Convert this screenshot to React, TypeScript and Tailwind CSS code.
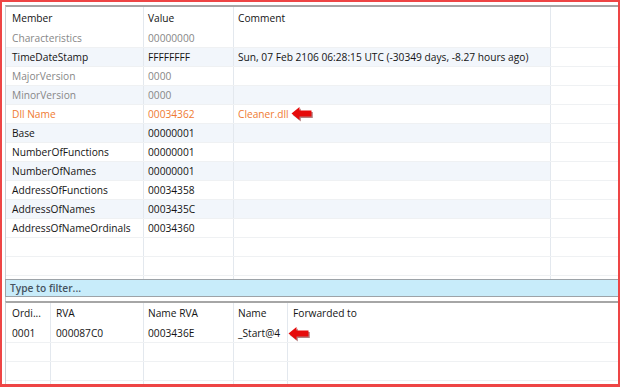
import React from "react";

type Row = { m: string; v: string; c?: string; kind?: "gray" | "orange" | "normal"; arrow?: boolean };

const rows: Row[] = [
  { m: "Characteristics", v: "00000000", kind: "gray" },
  { m: "TimeDateStamp", v: "FFFFFFFF", c: "Sun, 07 Feb 2106 06:28:15 UTC (-30349 days, -8.27 hours ago)" },
  { m: "MajorVersion", v: "0000", kind: "gray" },
  { m: "MinorVersion", v: "0000", kind: "gray" },
  { m: "Dll Name", v: "00034362", c: "Cleaner.dll", kind: "orange", arrow: true },
  { m: "Base", v: "00000001" },
  { m: "NumberOfFunctions", v: "00000001" },
  { m: "NumberOfNames", v: "00000001" },
  { m: "AddressOfFunctions", v: "00034358" },
  { m: "AddressOfNames", v: "0003435C" },
  { m: "AddressOfNameOrdinals", v: "00034360" },
];

function Arrow() {
  return (
    <svg width="24" height="17" viewBox="0 0 24 17" className="block">
      <path d="M0.5 7.5 L8.5 1 L8.5 4.5 L20.5 4.5 L20.5 10.5 L8.5 10.5 L8.5 14 Z" fill="#6a0000" opacity="0.5" transform="translate(1.3 1.6)" />
      <path d="M0.5 7.5 L8.5 1 L8.5 4.5 L20.5 4.5 L20.5 10.5 L8.5 10.5 L8.5 14 Z" fill="#e60b0b" />
    </svg>
  );
}

export default function App() {
  return (
    <div className="w-[620px] h-[387px] bg-white border-t-2 border-l-2 border-r-2 border-b-[3px] border-[#ee4545] flex flex-col overflow-hidden font-['Open_Sans','Noto_Sans',sans-serif] text-[10.2px] leading-none">
      <div className="flex-1 flex flex-col pt-[3px] pl-[3px] min-h-0">
        <div className="border-t-2 border-l border-t-[#a6a6a6] border-l-[#c9cdd2] flex flex-col h-[274px]">
          <div className="flex h-[22px] text-[#141414]">
            <div className="w-[138px] border-r border-[#e3e8ee] pl-[6px] flex items-center">Member</div>
            <div className="w-[90px] border-r border-[#e3e8ee] pl-[4px] flex items-center">Value</div>
            <div className="w-[317px] border-r border-[#e3e8ee] pl-[4px] flex items-center">Comment</div>
            <div className="flex-1" />
          </div>
          {rows.map((r, i) => {
            const color =
              r.kind === "gray" ? "text-[#878787]" : r.kind === "orange" ? "text-[#ef7a32]" : "text-[#141414]";
            const bg = i % 2 === 1 ? "bg-[#f2f6fb]" : "bg-white";
            return (
              <div key={r.m} className={`flex h-[19px] border-b border-[#eff1f3] ${color}`}>
                <div className={`w-[138px] border-r border-[#e3e8ee] pl-[6px] flex items-center ${bg}`}>{r.m}</div>
                <div className={`w-[90px] border-r border-[#e3e8ee] pl-[4px] flex items-center ${bg}`}>{r.v}</div>
                <div className={`w-[317px] border-r border-[#e3e8ee] pl-[4px] flex items-center whitespace-nowrap ${bg}`}>
                  {r.c}
                  {r.arrow && (
                    <span className="ml-[2px] mt-[1px]">
                      <Arrow />
                    </span>
                  )}
                </div>
                <div className="flex-1" />
              </div>
            );
          })}
          {[0, 1].map((k) => (
            <div key={k} className="flex h-[19px] border-b border-[#eff1f3]">
              <div className="w-[138px] border-r border-[#e3e8ee]" />
              <div className="w-[90px] border-r border-[#e3e8ee]" />
              <div className="w-[317px] border-r border-[#e3e8ee]" />
              <div className="flex-1" />
            </div>
          ))}
          <div className="flex flex-1">
            <div className="w-[138px] border-r border-[#e3e8ee]" />
            <div className="w-[90px] border-r border-[#e3e8ee]" />
            <div className="w-[317px] border-r border-[#e3e8ee]" />
            <div className="flex-1" />
          </div>
        </div>
        <div className="h-[18px] border-t border-b border-l border-[#9da3a8] bg-[#c8ecfa] flex items-center pl-[4px] font-semibold text-[#46535f]">
          Type to filter...
        </div>
        <div className="h-[4px] border-l border-[#c9cdd2]" />
        <div className="flex-1 border-t-2 border-l border-t-[#a6a6a6] border-l-[#c9cdd2] flex flex-col text-[#141414]">
          <div className="flex h-[21px]">
            <div className="w-[45px] border-r border-[#e3e8ee] pl-[6px] flex items-center">Ordi...</div>
            <div className="w-[93px] border-r border-[#e3e8ee] pl-[5px] flex items-center">RVA</div>
            <div className="w-[90px] border-r border-[#e3e8ee] pl-[4px] flex items-center">Name RVA</div>
            <div className="w-[54px] border-r border-[#e3e8ee] pl-[4px] flex items-center">Name</div>
            <div className="flex-1 pl-[5px] flex items-center">Forwarded to</div>
          </div>
          <div className="flex h-[19px] border-b border-[#eff1f3]">
            <div className="w-[45px] border-r border-[#e3e8ee] pl-[6px] flex items-center">0001</div>
            <div className="w-[93px] border-r border-[#e3e8ee] pl-[5px] flex items-center">000087C0</div>
            <div className="w-[90px] border-r border-[#e3e8ee] pl-[4px] flex items-center">0003436E</div>
            <div className="relative w-[54px] border-r border-[#e3e8ee] pl-[4px] flex items-center">
              _Start@4
              <span className="absolute left-[54px] top-[2px]">
                <Arrow />
              </span>
            </div>
            <div className="flex-1" />
          </div>
          {[0, 1].map((k) => (
            <div key={k} className="flex h-[19px] border-b border-[#eff1f3]">
              <div className="w-[45px] border-r border-[#e3e8ee]" />
              <div className="w-[93px] border-r border-[#e3e8ee]" />
              <div className="w-[90px] border-r border-[#e3e8ee]" />
              <div className="w-[54px] border-r border-[#e3e8ee]" />
              <div className="flex-1" />
            </div>
          ))}
          <div className="flex flex-1">
            <div className="w-[45px] border-r border-[#e3e8ee]" />
            <div className="w-[93px] border-r border-[#e3e8ee]" />
            <div className="w-[90px] border-r border-[#e3e8ee]" />
            <div className="w-[54px] border-r border-[#e3e8ee]" />
            <div className="flex-1" />
          </div>
        </div>
      </div>
    </div>
  );
}
